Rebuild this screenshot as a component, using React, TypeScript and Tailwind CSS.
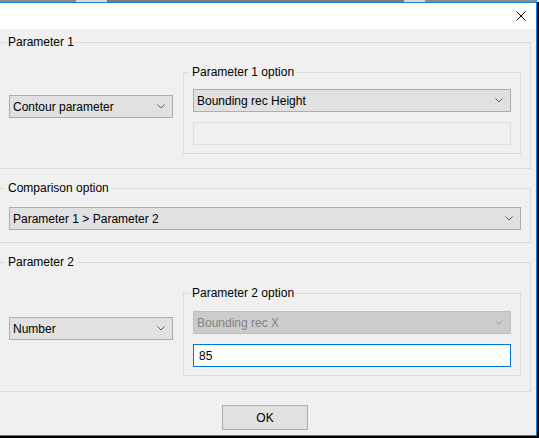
import React from 'react';

// little Win10-style dialog: two parameter groups + comparison combo

const Chevron = ({ color = '#606060' }: { color?: string }) => (
  <svg width="8" height="5" viewBox="0 0 8 5" fill="none">
    <polyline points="0.5,0.5 4,4 7.5,0.5" stroke={color} strokeWidth="1" />
  </svg>
);

function Combo({ text, className = '', disabled = false }: { text: string; className?: string; disabled?: boolean }) {
  return (
    <div
      className={`flex h-[23px] items-center justify-between border pl-[3px] pr-[7px] ${
        disabled ? 'border-[#bfbfbf] bg-[#cccccc] text-[#838383]' : 'border-[#adadad] bg-[#e1e1e1] text-black'
      } ${className}`}
    >
      <span className="leading-[14px]">{text}</span>
      <Chevron color={disabled ? '#a8a8a8' : '#606060'} />
    </div>
  );
}

function Group({ label, className = '', children }: { label: string; className?: string; children?: React.ReactNode }) {
  return (
    <div className={`relative border border-[#dcdcdc] ${className}`}>
      <span className="absolute left-[6px] top-[-8px] bg-[#f0f0f0] px-[2px] leading-[14px] text-black">{label}</span>
      {children}
    </div>
  );
}

export default function App() {
  return (
    <div
      className="h-[438px] w-[539px] overflow-hidden bg-black text-[12px]"
      style={{ fontFamily: '"Liberation Sans", Arial, sans-serif' }}
    >
      {/* windows behind the dialog */}
      <div className="flex h-[2px] w-full">
        <div className="w-[76px] bg-[#8c8c8c]" />
        <div className="w-[31px] bg-[#d9d9d9]" />
        <div className="w-[297px] bg-[#7a7a7a]" />
        <div className="w-[21px] bg-[#d9d9d9]" />
        <div className="w-[112px] bg-[#8c8c8c]" />
        <div className="flex-1 bg-[#e8e8e8]" />
      </div>

      <div className="flex h-[434px] w-[537px] flex-col border-b border-r border-t border-[#1883d7] bg-[#f0f0f0]">
        <div className="flex h-[26px] shrink-0 items-center justify-end bg-white pr-[10px]">
          <svg width="10" height="10" viewBox="0 0 10 10">
            <line x1="0.5" y1="0.5" x2="9.5" y2="9.5" stroke="#000" strokeWidth="1" />
            <line x1="9.5" y1="0.5" x2="0.5" y2="9.5" stroke="#000" strokeWidth="1" />
          </svg>
        </div>

        <div className="flex flex-1 flex-col">
          <Group label="Parameter 1" className="ml-[-1px] mt-[13px] h-[127px] w-[532px]">
            <div className="flex items-start pl-[9px] pt-[29px]">
              <Combo text="Contour parameter" className="mt-[23px] w-[164px]" />
              <Group label="Parameter 1 option" className="ml-[10px] h-[82px] w-[338px]">
                <div className="flex flex-col pl-[9px] pt-[16px]">
                  <Combo text="Bounding rec Height" className="w-[318px]" />
                  <div className="mt-[10px] h-[23px] w-[318px] border border-[#dedede] bg-[#f0f0f0]" />
                </div>
              </Group>
            </div>
          </Group>

          <Group label="Comparison option" className="ml-[-1px] mt-[19px] h-[55px] w-[532px]">
            <div className="pl-[9px] pt-[18px]">
              <Combo text="Parameter 1 > Parameter 2" className="w-[512px]" />
            </div>
          </Group>

          <Group label="Parameter 2" className="ml-[-1px] mt-[19px] h-[130px] w-[532px]">
            <div className="flex items-start pl-[9px] pt-[30px]">
              <Combo text="Number" className="mt-[24px] w-[164px]" />
              <Group label="Parameter 2 option" className="ml-[10px] h-[83px] w-[338px]">
                <div className="flex flex-col pl-[9px] pt-[17px]">
                  <Combo text="Bounding rec X" className="w-[318px]" disabled />
                  <div className="mt-[10px] flex h-[23px] w-[318px] items-center border border-[#0078d7] bg-white pl-[5px]">
                    <span className="leading-[14px] text-black">85</span>
                  </div>
                </div>
              </Group>
            </div>
          </Group>

          <div className="ml-[222px] mt-[13px]">
            <button className="flex h-[25px] w-[86px] items-center justify-center border border-[#adadad] bg-[#e1e1e1] text-black">
              OK
            </button>
          </div>
        </div>
      </div>
    </div>
  );
}
